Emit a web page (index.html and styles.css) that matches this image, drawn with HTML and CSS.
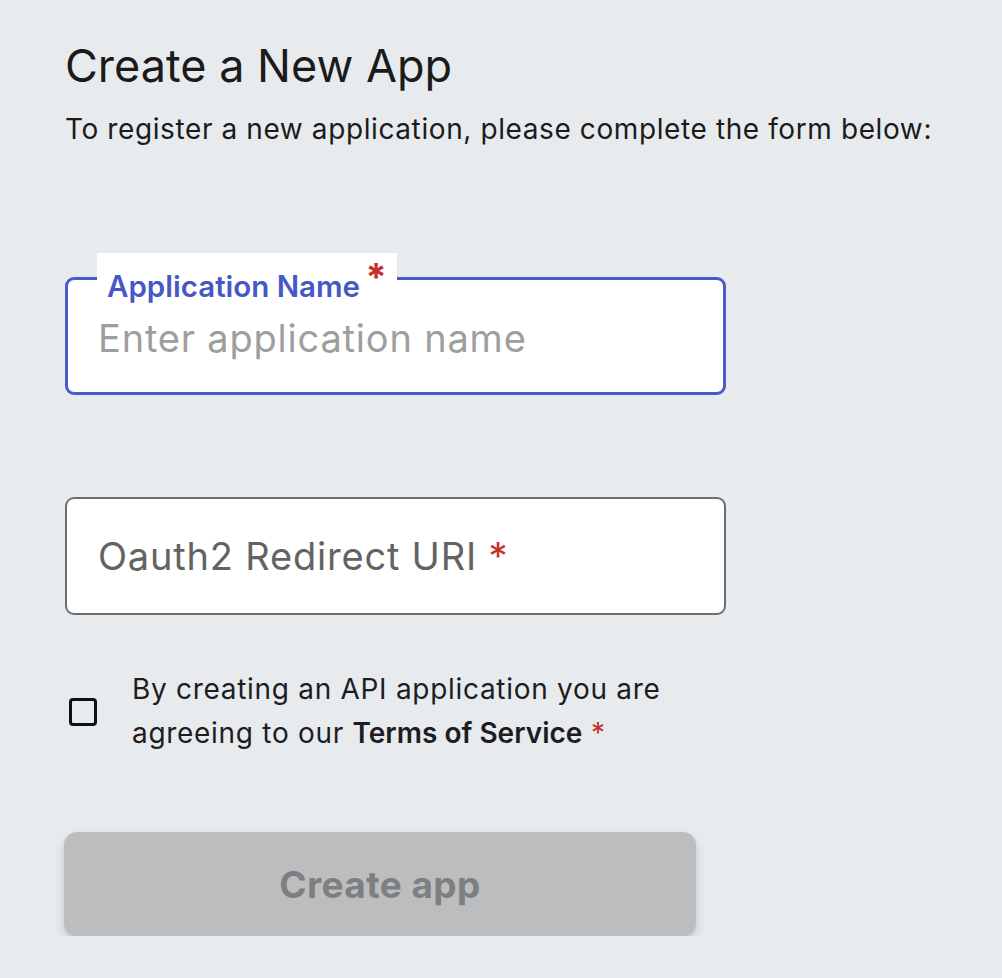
FILE: index.html
```html
<!DOCTYPE html>
<html lang="en">
<head>
<meta charset="utf-8">
<title>Create a New App</title>
<link rel="stylesheet" href="styles.css">
</head>
<body>
<main class="page">
  <h1 class="title">Create a New App</h1>
  <p class="subtitle">To register a new application, please complete the form below:</p>

  <form class="form">
    <div class="field field-focused">
      <label class="field-label">Application Name <span class="req req-label">*</span></label>
      <div class="field-input placeholder">Enter application name</div>
    </div>

    <div class="field field-idle">
      <div class="field-input idle-label">Oauth2 Redirect URI <span class="req">*</span></div>
    </div>

    <div class="agree">
      <span class="checkbox"></span>
      <p class="agree-text"><span class="line">By creating an API application you are</span><br><span class="line">agreeing to our</span> <strong>Terms of Service</strong> <span class="req">*</span></p>
    </div>

    <button type="button" class="submit" disabled>Create app</button>
  </form>
</main>
</body>
</html>
```

FILE: styles.css
```css
html, body {
  margin: 0;
  padding: 0;
  background: #e8ebee;
}
body {
  font-family: "Inter", "Lato", sans-serif;
  color: #1d1d1f;
}
.page {
  padding: 38px 0 0 65px;
}
.title {
  margin: 0;
  font-size: 45px;
  font-weight: 400;
  line-height: 56px;
  color: #1b1b1b;
}
.subtitle {
  margin: 17px 0 0;
  font-size: 28px;
  letter-spacing: 0.6px;
  line-height: 36px;
  color: #1b1b1b;
  white-space: nowrap;
}
.form {
  display: flex;
  flex-direction: column;
  width: 661px;
  margin-top: 130px;
}
.field {
  position: relative;
  box-sizing: border-box;
  height: 118px;
  background: #fff;
  border-radius: 9px;
  display: flex;
  align-items: center;
}
.field-focused {
  border: 3px solid #4a5bc7;
}
.field-idle {
  border: 2px solid #6e6e6e;
  margin-top: 102px;
}
.field-label {
  position: absolute;
  top: -27px;
  left: 29px;
  padding: 13px 10px 0 10px;
  height: 41px;
  line-height: 40px;
  background: #fff;
  font-size: 29.5px;
  font-weight: 600;
  color: #4658c6;
}
.req {
  color: #c4302b;
}
.req-label {
  display: inline-block;
  font-size: 38px;
  font-weight: 700;
  vertical-align: top;
  margin-top: -9px;
  margin-left: -2px;
  line-height: 40px;
}
.field-input {
  font-size: 38px;
  letter-spacing: 0.8px;
  padding-left: 30px;
}
.placeholder {
  color: #9e9e9e;
  margin-top: 4px;
}
.idle-label {
  color: #636363;
  padding-left: 31px;
}
.idle-label .req {
  letter-spacing: 0;
}
.agree {
  display: flex;
  align-items: center;
  margin-top: 52px;
}
.checkbox {
  box-sizing: border-box;
  width: 28px;
  height: 28px;
  border: 3px solid #111;
  border-radius: 4px;
  margin-left: 4px;
  margin-top: 2px;
  flex: none;
}
.agree-text {
  margin: 0 0 0 35px;
  width: 580px;
  font-size: 28px;
  letter-spacing: 0.7px;
  line-height: 44px;
  color: #1d1d1f;
}
.agree-text strong {
  font-weight: 600;
  letter-spacing: 0;
}
.agree-text .req {
  letter-spacing: 0;
}
.submit {
  margin-top: 77px;
  margin-left: -1px;
  width: 632px;
  height: 104px;
  border: none;
  border-radius: 13px;
  background: #bcbdbf;
  color: #7e7f81;
  font-family: "Inter", "Lato", sans-serif;
  font-size: 37px;
  letter-spacing: 0.4px;
  font-weight: 700;
  box-shadow: 0 6px 12px rgba(0, 0, 0, 0.12), 0 2px 4px rgba(0, 0, 0, 0.06);
}
```
